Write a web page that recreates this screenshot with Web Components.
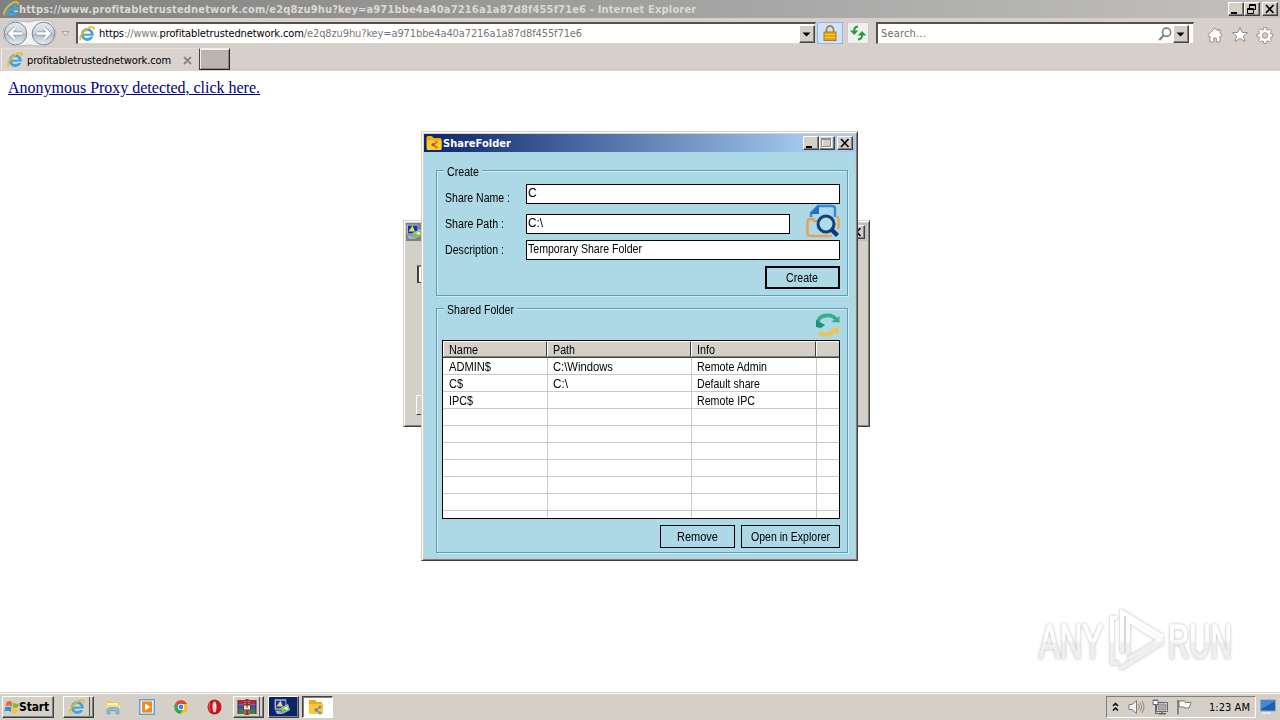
<!DOCTYPE html>
<html lang="en">
<head>
<meta charset="utf-8">
<title>Desktop</title>
<style>
html,body{margin:0;padding:0;width:1280px;height:720px;overflow:hidden;background:#fff}
body{font-family:"DejaVu Sans Condensed","DejaVu Sans",sans-serif;font-size:11px;color:#000}
</style>
</head>
<body>
<desktop-screen></desktop-screen>
<script>
const define = (name, css, html, init) => customElements.define(name, class extends HTMLElement {
  constructor() {
    super();
    const root = this.attachShadow({ mode: 'open' });
    const t = document.createElement('template');
    t.innerHTML = `<style>*{box-sizing:border-box}:host{box-sizing:border-box}${css}</style>${typeof html === 'function' ? html(this) : html}`;
    root.append(t.content.cloneNode(true));
  }
  connectedCallback() { if (init) init(this); }
});

const IE = `<circle cx="8.3" cy="8.5" r="5" fill="none" stroke="#3fa4df" stroke-width="2.900"/><path d="M4 8.700H13" stroke="#3fa4df" stroke-width="2"/><path d="M10.800 10.900H15V9.700H10.800z" fill="#d4e4ec"/><path d="M1.600 14.300C-.5 11.500 4.500 4.500 9.500 2 13 .3 15.600 .6 14.900 3.800" fill="none" stroke="#f0b81e" stroke-width="1.700"/>`;
const MONITOR = `<path d="M1 .5h11v10H1z" fill="#dfe5ee" stroke="#8a93a8"/><path d="M2 1.500h9.500v8H2z" fill="#1030b0"/><path d="M2.500 7.500L6.500 1.500l2.500 6z" fill="#f0dc40"/><path d="M6.500 9l7.500-4 2 6-7.500 4z" fill="#b8c8d0"/><path d="M7 9.500l7-3.500 1.500 5-7 3.500z" fill="#7cc04c"/><path d="M9 9.500l4.500-2 .5 3.500z" fill="#e6f4fa"/><path d="M1 11.500h5.500l2 3.500H3z" fill="#9cb4c8"/>`;
const ICONS = {
  ie: IE,
  folder: `<path d="M.5 2.500q0-1.500 1.500-1.500h4l1.500 2H14q1.500 0 1.500 1.500v9q0 1.500-1.500 1.500H2q-1.500 0-1.500-1.500z" fill="#f0ae14"/><path d="M1 5.500h14.500v8q0 1.500-1.500 1.500H2q-1 0-1-1.500z" fill="#ffca38"/><path d="M10.500 7L7.500 9.700l3 2.700" fill="none" stroke="#b5651d" stroke-width="1.400"/><circle cx="10.500" cy="7" r="1.300" fill="#d87d1c"/><circle cx="7" cy="9.700" r="1.600" fill="#b85a20"/><circle cx="10.500" cy="12.400" r="1.300" fill="#d87d1c"/>`,
  folder2: `<path d="M1 1h6l1.500 2H14v12H1z" fill="#f0a818"/><path d="M1 5h14v10H1z" fill="#ffc638"/><path d="M12 8L8 11l4 3" fill="none" stroke="#6889a8" stroke-width="1.200"/><circle cx="12" cy="8" r="1.500" fill="#7390ab"/><circle cx="8" cy="11" r="1.700" fill="#7390ab"/><circle cx="12" cy="14" r="1.500" fill="#7390ab"/>`,
  monitor: MONITOR,
  lock: `<path d="M4.500 8V4.500a3.500 3.500 0 0 1 7 0V8" fill="none" stroke="#a8853a" stroke-width="1.800"/><rect x="2" y="7" width="12" height="8.500" fill="#e5a212" stroke="#b87d10"/><path d="M3 9.500h10M3 12.500h10" stroke="#f7d050"/>`,
  refresh: `<path d="M8 1.500Q4.200 2 4.200 5.500V6" fill="none" stroke="#2d9a3a" stroke-width="2"/><path d="M0 5.500h8.400L4.200 10z" fill="#2d9a3a"/><path d="M8 14.500q4-.5 4-4V10" fill="none" stroke="#2d9a3a" stroke-width="2"/><path d="M7.700 10.500L12 6l4.200 4.500z" fill="#2d9a3a"/>`,
  glass: `<circle cx="9.800" cy="6" r="4.700" fill="none" stroke="#808080" stroke-width="1.800"/><path d="M6.500 9.500L1.500 15" stroke="#808080" stroke-width="2.500"/>`,
  home: `<path d="M8 1L.8 8.200 2.300 9.600 3 9v6h3.700v-4h2.600v4H13V9l.7.6L15.200 8.200 13 6V2.500h-2V4z" fill="#fff" stroke="#8c8885" stroke-width=".9"/>`,
  star: `<path d="M8 .3l2.200 5.200h5.500l-4.300 3.500 1.700 5.500L8 11.400l-5.100 3.100 1.700-5.500L.3 5.500h5.500z" fill="#fff" stroke="#8c8885" stroke-width=".9"/>`,
  gear: `<path d="M6.700 .6h2.600l.3 2 1.500.6 1.600-1.200 1.800 1.800-1.200 1.600.6 1.500 2 .3v2.600l-2 .3-.6 1.500 1.200 1.600-1.800 1.800-1.600-1.200-1.500.6-.3 2H6.700l-.3-2-1.500-.6L3.300 15 1.500 13.200l1.200-1.600-.6-1.500-2-.3V7.200l2-.3.600-1.500L1.500 3.800 3.300 2l1.600 1.200 1.500-.6z" fill="#fff" stroke="#8c8885" stroke-width=".9"/><circle cx="8" cy="8.500" r="2.700" fill="#d4cec9" stroke="#8c8885" stroke-width=".9"/>`,
  start: `<g transform="rotate(8 8 8)"><path d="M2 3.500Q4.800 1.700 7.600 3.200V7.500Q4.800 6.300 1.500 8z" fill="#ee6a2b"/><path d="M8.500 3.500Q11.500 5 14.500 3.200L14 7.500Q11 9.200 8.500 7.900z" fill="#7dbb38"/><path d="M1.400 9Q4.500 7.500 7.500 8.700V13Q4.500 11.700 1 13.300z" fill="#2d8ee0"/><path d="M8.400 9Q11.300 10.300 14 8.800L13.500 13Q11 14.600 8.400 13.400z" fill="#fcc22c"/></g>`,
  explorer: `<path d="M1 2h5l1 1h7v10H1z" fill="#ecc75c"/><path d="M2 4h11v3H2z" fill="#fff2b8"/><path d="M1 6h14v4H1z" fill="#f7dc82"/><path d="M2 15V11.500q0-3 3-3h6q3 0 3 3V15h-3v-2.500q0-1-1-1H6q-1 0-1 1V15z" fill="#86bde4" stroke="#5c98c8" stroke-width=".6"/>`,
  media: `<rect x=".7" y=".7" width="14.600" height="14.600" fill="#e7f1fa" stroke="#5b9ad0" stroke-width="1.300"/><rect x="3" y="2.500" width="10" height="11" fill="#f28a16"/><path d="M6 4.500l5.500 3.500L6 11.500z" fill="#fff"/>`,
  chrome: `<circle cx="8" cy="8" r="6.700" fill="#f2c51c"/><path d="M8 8L2.200 4.600A6.700 6.700 0 0 1 14 5H8z" fill="#df4335"/><path d="M8 8L2.200 4.600A6.700 6.700 0 0 0 7.500 14.700L10.500 9.500z" fill="#36a354"/><circle cx="8" cy="8" r="3.200" fill="#fff"/><circle cx="8" cy="8" r="2.400" fill="#4383ea"/>`,
  opera: `<ellipse cx="7.500" cy="8" rx="7" ry="7.500" fill="#c4161c"/><ellipse cx="7.500" cy="8" rx="2" ry="5.400" fill="#e7d9d5"/><path d="M2.500 4q-1.500 5 1 8" stroke="#ee6a68" fill="none"/>`,
  rar: `<path d="M-1 1h18v4.500H-1z" fill="#b3263e"/><path d="M-1 5.500h18V10H-1z" fill="#4550ae"/><path d="M-1 10h18v5H-1z" fill="#378247"/><path d="M-1 1v14M17 1v14" stroke="#4b2445"/><path d="M5.500 0h5v16h-5z" fill="#9d3036"/><path d="M4.500 6h7v5h-7z" fill="#eee6cf" stroke="#594526"/><path d="M8 5.500V9" stroke="#594526"/><path d="M6 0v6M10 0v6M6 11.500V16M10 11.500V16" stroke="#e5c2a0" stroke-dasharray="1 1"/>`,
  sound: `<path d="M1 5.500h3l4.500-4v13L4 10.500H1z" fill="#f4f4f4" stroke="#7e7a77"/><path d="M10.500 5.500q1.800 2.500 0 5M12.300 3.700q3 4.300 0 8.600M14 2q4 6 0 12" fill="none" stroke="#8c8885"/>`,
  net: `<path d="M4.500 3.500h11v9h-11z" fill="#f2f2f2" stroke="#666"/><path d="M6 5h8v6H6z" fill="#aaa8a6" stroke="#888"/><path d="M10 13v1.500M7 14.800h7" stroke="#666" stroke-width="1.500"/><path d="M3.500 5v9.500H7" fill="none" stroke="#666"/><path d="M1 1.500h5v4H1z" fill="#fff" stroke="#666"/><path d="M2.200 0v2M4.800 0v2" stroke="#666"/>`,
  flag: `<path d="M2 1v14.500" stroke="#6f6c69" stroke-width="1.500"/><path d="M3 2h5.500l1 1.500H15L13 9H9L8 8H3z" fill="#f8f8f8" stroke="#7c7976"/>`,
  desk: `<path d="M.5 1h15v11H.500z" fill="#215fae" stroke="#85a8d2"/><path d="M1 2h14L1 10z" fill="#438bd9"/><path d="M2 14h9" stroke="#eee" stroke-width="1.500"/>`,
};
define('app-icon', `:host{display:block;width:16px;height:16px;flex:none}svg{display:block;width:100%;height:100%;overflow:visible}`,
  el => `<svg viewBox="0 0 16 16">${ICONS[el.getAttribute('name')] || ''}</svg>`);

const GLYPH = {
  min: `<path d="M3 10h6v2H3z"/>`,
  restore: `<path d="M5.500 2.500h6v5h-6zM5 3.500h7" fill="none" stroke="#000"/><path d="M3.500 6.500h6v5h-6z" fill="#d4d0c8" stroke="#000"/><path d="M3 7.500h7" stroke="#000"/>`,
  max: `<path d="M3.500 3.500h9v8h-9z" fill="none" stroke="#fff"/><path d="M2.500 2.500h9v8h-9zM2 3.500h10" fill="none" stroke="#928d88"/>`,
  close: `<path d="M4 3l7.500 8M11.500 3L4 11" stroke="#000" stroke-width="1.700"/>`,
  down: `<path d="M3.500 5.500h8L7.500 9.500z"/>`,
};
define('win-control', `:host{display:block;width:16px;height:14px;flex:none;background:#d4d0c8;border:1px solid;border-color:#fff #404040 #404040 #fff;box-shadow:inset -1px -1px #808080}
 svg{display:block;width:14px;height:14px;margin:-1px 0 0 -1px;overflow:visible}:host([tall]){height:18px}:host([tall]) svg{margin-top:1px}`,
  el => `<svg viewBox="0 0 14 14">${GLYPH[el.getAttribute('kind')]}</svg>`);

define('nav-bar', `:host{display:flex;height:30px;background:#d6cfca;padding:0 7px 0 3px;align-items:flex-start;position:relative}
 .arrows{width:73px;height:30px;flex:none}
 .box{display:flex;align-items:center;height:22px;margin-top:4px;background:#fff;border:1px solid;border-color:#55514e #d8d3cf #d8d3cf #55514e;border-width:2px 1px 1px 2px}
 .addr{width:740px;padding:0 0 0 2px}.addr app-icon{margin:0 4px 0 -1px}.addr .t{flex:1;white-space:nowrap;color:#777}
 b{font-weight:normal;color:#000}
 .btn{width:26px;height:22px;margin:4px 0 0 1px;background:#cfe1fb;border:1px solid #8bb7ee;display:flex;align-items:center;justify-content:center}
 .r{width:22px;margin-left:4px;background:#edf1ed;border-color:#cacaca;border-radius:2px}
 .search{width:318px;margin-left:7px;padding:0 4px 0 3px;color:#6d6d6d}.search .t{flex:1}.search app-icon{width:14px;height:14px;margin-right:1px}
 .tools{display:flex;gap:9px;margin:9px 0 0 13px}`,
 `<svg class="arrows" viewBox="3 18 73 30"><defs><linearGradient id="g" x1="0" y1="0" x2="0" y2="1"><stop offset="0" stop-color="#e6eaf0"/><stop offset=".48" stop-color="#c9d1da"/><stop offset=".52" stop-color="#aebac7"/><stop offset="1" stop-color="#e9f1f7"/></linearGradient></defs>
 <path d="M3 33a12 12 0 0 1 12-12q7 0 14 1 7-2 14-2a13 13 0 0 1 0 26q-8 0-14-1-7 1-14 1A12 12 0 0 1 3 33z" fill="#f3f3f3" stroke="#aaa5a2" stroke-width=".7"/>
 <circle cx="15.500" cy="33.500" r="11.300" fill="url(#g)" stroke="#7b8794"/><circle cx="43.500" cy="33.500" r="11.300" fill="url(#g)" stroke="#7b8794"/>
 <path d="M22 33.500H10M15 28l-5.500 5.500L15 39" fill="none" stroke="#8795a3" stroke-width="4"/><path d="M22 33.500H10M15 28l-5.500 5.500L15 39" fill="none" stroke="#fff" stroke-width="2.500"/>
 <path d="M37 33.500h12M44 28l5.500 5.500L44 39" fill="none" stroke="#8795a3" stroke-width="4"/><path d="M37 33.500h12M44 28l5.500 5.500L44 39" fill="none" stroke="#fff" stroke-width="2.500"/>
 <path d="M62 31.500h7L65.500 36z" fill="#e5e2de" stroke="#aaa39e"/></svg>
 <div class="box addr"><app-icon name="ie"></app-icon><span class="t"><fit-text w="483"><b>https</b>://www.<b>profitabletrustednetwork.com</b>/e2q8zu9hu?key=a971bbe4a40a7216a1a87d8f455f71e6</fit-text></span><win-control kind="down" tall></win-control></div>
 <div class="btn"><app-icon name="lock"></app-icon></div><div class="btn r"><app-icon name="refresh"></app-icon></div>
 <div class="box search"><span class="t"><fit-text w="45">Search...</fit-text></span><app-icon name="glass"></app-icon><win-control kind="down" tall></win-control></div>
 <div class="tools"><app-icon name="home"></app-icon><app-icon name="star"></app-icon><app-icon name="gear"></app-icon></div>`);

define('tab-strip', `:host{display:flex;height:23px;background:#d6cfca;border-bottom:1px solid #d9d2ce;box-shadow:inset 0 -2px #d3ccc8}
 .tab{width:197px;display:flex;align-items:center;padding:1px 6px 0 5px;border-left:1px solid #eee;border-top:1px solid #e3deda;background:#d9d2ce;margin-left:1px}
 .tab app-icon{margin-right:4px}.t{flex:1}svg{width:9px;height:9px}
 .new{width:31px;height:22px;margin-left:1px;background:#bcb4b0;border:1px solid;border-color:#eee #222 #222 #444;box-shadow:inset 1px 1px #f2efed,inset -1px -1px #8d8784}`,
 `<div class="tab"><app-icon name="ie"></app-icon><span class="t"><fit-text w="144">profitabletrustednetwork.com</fit-text></span><svg viewBox="0 0 9 9"><path d="M1 1l7 7M8 1L1 8" stroke="#8d8784" stroke-width="1.900"/></svg></div><div class="new"></div>`);

define('browser-window', `:host{display:flex;flex-direction:column;height:692px;background:#fff}
 header{display:flex;align-items:center;height:18px;background:linear-gradient(90deg,#808080,#c2c1c0);padding:0 2px 0 3px;color:#dcd8d0;font-weight:bold;flex:none}
 header .t{flex:1}header win-control:last-child{margin-left:2px}
 main{flex:1;padding:7px 8px;font:16px/19px "Liberation Serif",serif}
 a{color:#00007c;text-decoration:underline}a fit-text{text-decoration:underline}`,
 `<header><app-icon name="ie"></app-icon><span class="t"><fit-text w="677">https://www.profitabletrustednetwork.com/e2q8zu9hu?key=a971bbe4a40a7216a1a87d8f455f71e6 - Internet Explorer</fit-text></span><win-control kind="min"></win-control><win-control kind="restore"></win-control><win-control kind="close"></win-control></header>
 <nav-bar></nav-bar><tab-strip></tab-strip><main><a href="#"><fit-text w="252">Anonymous Proxy detected, click here.</fit-text></a></main>`);

define('back-window', `:host{display:flex;flex-direction:column;background:#d4d0c8;border:1px solid;border-color:#d4d0c8 #404040 #404040 #d4d0c8;box-shadow:inset 1px 1px #fff,inset -1px -1px #808080;padding:2px}
 header{display:flex;justify-content:space-between;align-items:center;height:18px;background:linear-gradient(90deg,#808080,#c0c0c0);padding:0 2px 0 0}
 .f{width:20px;height:18px;margin:24px 0 0 11px;background:#fff;border:2px solid;border-color:#808080 #fff #404040 #404040;border-width:2px 1px 1px 2px}
 .b{width:20px;height:20px;margin:112px 0 0 10px;border:1px solid;border-color:#fff #404040 #404040 #fff}`,
 `<header><app-icon name="monitor"></app-icon><win-control kind="close"></win-control></header><div class="f"></div><div class="b"></div>`);

define('group-box', `:host{display:block;position:relative;border:1px solid #589fb9;box-shadow:inset 1px 1px #d0eef6,1px 1px #d0eef6}
 .l{position:absolute;left:7px;top:-7px;height:14px;line-height:16px;background:#add8e6;padding:0 3px}`,
 el => `<span class="l"><fit-text w="${el.getAttribute('lw')}">${el.getAttribute('label')}</fit-text></span><slot></slot>`);

define('text-field', `:host{display:block;height:20px;background:#fff;border:1px solid #000;padding:0 1px;line-height:17px}`, `<slot></slot>`);
define('push-button', `:host{display:flex;height:23px;align-items:center;justify-content:center;border:1px solid #000;line-height:15px;padding:1px 1px 0 0}:host([primary]){border-width:2px}`, `<slot></slot>`);

const rows = [['ADMIN$', 42, 'C:\\Windows', 60, 'Remote Admin', 70], ['C$', 14, 'C:\\', 15, 'Default share', 63], ['IPC$', 24, '', 0, 'Remote IPC', 58]];
const cell = (t, w) => `<div>${t ? `<fit-text w="${w}">${t}</fit-text>` : ''}</div>`;
define('list-view', `:host{display:block;height:179px;border:1px solid #000;background:#fff;overflow:hidden}
 .r,.h{display:grid;grid-template-columns:105px 144px 125px 1fr}
 .h{height:17px;grid-template-columns:104px 144px 125px 1fr;border-bottom:1px solid #404040;background:#d4d0c8}
 .h div{border:1px solid;border-color:#fff #404040 #808080 #fff;height:16px;line-height:16px;padding-left:5px}
 .h div:last-child{border-right:0}
 .r{height:17px}.r div{height:17px;border-right:1px solid #c8c8c8;border-bottom:1px solid #c8c8c8;line-height:18px;padding-left:6px}.r div+div{padding-left:5px}.r div:last-child{border-right:0}`,
 `<div class="h">${cell('Name', 29)}${cell('Path', 22)}${cell('Info', 18)}<div></div></div>` +
 [...rows, ...Array(7).fill(['', 0, '', 0, '', 0])].map(r => `<div class="r">${cell(r[0], r[1])}${cell(r[2], r[3])}${cell(r[4], r[5])}<div></div></div>`).join(''));

define('share-window', `:host{--squeeze:1;display:flex;flex-direction:column;background:#add8e6;border:1px solid;border-color:#d4d0c8 #404040 #404040 #d4d0c8;box-shadow:inset 1px 1px #fff,inset -1px -1px #808080,inset 2px 2px #d4d0c8,inset -2px -2px #c4ccc9;padding:2px;font:12px "Liberation Sans",sans-serif}
 header{--squeeze:0;display:flex;align-items:center;height:18px;padding:0 2px 0 2px;background:linear-gradient(90deg,#0a246a,#a6caf0 90%);color:#fff;font:bold 11px "DejaVu Sans Condensed","DejaVu Sans",sans-serif}
 header .t{flex:1;padding-left:1px}header win-control:last-child{margin-left:2px}
 .one{height:126px;margin:18px 7px 0 12px;padding:13px 7px 0 8px}
 .row{display:grid;grid-template-columns:81px 1fr;height:20px;align-items:start}.row>span{padding-top:6px;line-height:16px;height:20px}
 .p{grid-template-columns:81px 264px 1fr;margin:10px 0 6px}.p>span{padding-top:2px}.d>span{padding-top:2px}
 .p svg{width:34px;height:34px;margin:-10px 0 0 16px}
 .one push-button{width:75px;margin:6px 0 0 auto}
 .two{height:245px;margin:12px 7px 0 12px;padding:0 7px 0 5px}
 .two svg{display:block;width:24px;height:24px;margin:4px 0 3px auto}
 .foot{display:flex;justify-content:flex-end;gap:6px;margin-top:6px}`,
 `<header><app-icon name="folder"></app-icon><span class="t"><fit-text w="68">ShareFolder</fit-text></span><win-control kind="min"></win-control><win-control kind="max"></win-control><win-control kind="close"></win-control></header>
 <group-box class="one" label="Create" lw="32">
 <div class="row"><span><fit-text w="65">Share Name :</fit-text></span><text-field><fit-text w="8">C</fit-text></text-field></div>
 <div class="row p"><span><fit-text w="59">Share Path :</fit-text></span><text-field><fit-text w="15">C:\\</fit-text></text-field>
 <svg viewBox="0 0 34 34"><path d="M5 13V9L12 2h14q3 0 3 3v8" fill="none" stroke="#378bd6" stroke-width="2.500"/><path d="M4 10L13 1v9z" fill="#216ebc"/><path d="M11 17H8q0-2-2-2H4q-2.500 0-2.500 3v11q0 3 3 3H26M30 13q2.500 0 2.500 3v9" fill="none" stroke="#e8a44c" stroke-width="2.500"/><circle cx="20" cy="20" r="8" fill="#aedce9" stroke="#173f7b" stroke-width="3"/><path d="M25.500 25.500l6 6" stroke="#12366f" stroke-width="4.500"/></svg></div>
 <div class="row d"><span><fit-text w="59">Description :</fit-text></span><text-field><fit-text w="114">Temporary Share Folder</fit-text></text-field></div>
 <push-button primary><fit-text w="32">Create</fit-text></push-button></group-box>
 <group-box class="two" label="Shared Folder" lw="67">
 <svg viewBox="0 0 24 24"><path d="M2 12Q1 3 11 2.500q6-.5 9 4" fill="none" stroke="#35ae91" stroke-width="3.800"/><path d="M15 9l8.500 .5V3z" fill="#35ae91"/><path d="M0 14V7l9 5-4 3z" fill="#179477"/><path d="M3 20q8 4 14-1 3-2 3-3" fill="none" stroke="#ebc552" stroke-width="3.800"/><path d="M14 16l9-2v7z" fill="#ebc552"/></svg>
 <list-view></list-view><div class="foot"><push-button style="width:75px"><fit-text w="41">Remove</fit-text></push-button><push-button style="width:99px"><fit-text w="79">Open in Explorer</fit-text></push-button></div></group-box>`);

define('task-button', `:host{display:flex;width:31px;height:22px;flex:none;align-items:center;justify-content:center}
 :host([up]){border:1px solid;border-color:#fff #404040 #404040 #fff;box-shadow:inset -1px -1px #808080}
 :host([stack]){padding-right:4px;border-right:1px solid #404040;box-shadow:inset -1px -1px #808080,inset -3px 0 #d4d0c8,inset -4px 0 #555}
 :host([blue]){background:#0a246a;padding-right:3px;margin-left:1px}:host([pressed]){padding-right:3px;background:#fff;border:1px solid;border-color:#404040 #fff #fff #404040;box-shadow:inset 1px 1px #808080}`,
 el => `<app-icon name="${el.getAttribute('icon')}"></app-icon>`);

define('task-bar', `:host{display:flex;height:28px;background:#d4d0c8;border-top:1px solid #d4d0c8;box-shadow:inset 0 1px #fff;padding:3px 4px 0 2px;align-items:flex-start}
 .start{width:52px;height:22px;display:flex;align-items:center;font-weight:bold;padding-left:1px;border:1px solid;border-color:#fff #404040 #404040 #fff;box-shadow:inset -1px -1px #808080}
 .start fit-text{font-size:12px;margin-left:-1px}
 .apps{display:flex;gap:3px;margin-left:9px;flex:1}
 .tray{width:150px;height:22px;border:1px solid;border-color:#808080 #fff #fff #808080;display:flex;align-items:center;padding-left:5px}
 .tray svg{width:7px;height:10px;margin-right:9px}.tray app-icon{margin-right:8px}.tray fit-text{margin-left:9px}
 .desk{margin:3px 0 0 4px}`,
 `<div class="start"><app-icon name="start"></app-icon><fit-text w="30">Start</fit-text></div>
 <div class="apps"><task-button icon="ie" up stack></task-button><task-button icon="explorer"></task-button><task-button icon="media"></task-button><task-button icon="chrome"></task-button><task-button icon="opera"></task-button><task-button icon="rar" up stack></task-button><task-button icon="monitor" up blue></task-button><task-button icon="folder2" pressed></task-button></div>
 <div class="tray"><svg viewBox="0 0 7 10"><path d="M1 4l2.500-2.500L6 4M1 8.500L3.500 6 6 8.500" fill="none" stroke="#000" stroke-width="1.500"/></svg><app-icon name="sound"></app-icon><app-icon name="net"></app-icon><app-icon name="flag"></app-icon><fit-text w="41">1:23 AM</fit-text></div><app-icon class="desk" name="desk"></app-icon>`);

define('water-mark', `:host{display:block;width:240px;height:84px}svg{display:block;filter:drop-shadow(0 0 1.500px #b8b8b8)}text{font:48px "Liberation Sans",sans-serif;stroke-width:1.500px}`,
 `<svg width="240" height="84" viewBox="1020 598 240 84"><defs><linearGradient id="w" gradientUnits="userSpaceOnUse" x1="0" y1="610" x2="0" y2="672"><stop offset=".48" stop-color="#fff"/><stop offset=".54" stop-color="#efefef"/></linearGradient>
 <linearGradient id="t" gradientUnits="userSpaceOnUse" x1="0" y1="-48" x2="0" y2="14"><stop offset=".48" stop-color="#fff"/><stop offset=".54" stop-color="#efefef"/></linearGradient></defs>
 <g fill="url(#t)" stroke="url(#t)"><text transform="translate(1039 658) scale(.65 1)">ANY</text><text transform="translate(1168 658) scale(.615 1)">RUN</text></g>
 <g fill="none" stroke="url(#w)" stroke-width="4"><path d="M1128 654V620l32 20-32 19"/><path d="M1122 653V612l41 25M1117 618h-5v45h7M1120 669l43-27"/></g></svg>`);

define('desktop-screen', `:host{display:block;width:1280px;height:720px;position:relative;overflow:hidden}
 back-window{position:absolute;left:403px;top:220px;width:467px;height:207px}
 share-window{position:absolute;left:421px;top:131px;width:437px;height:430px}
 water-mark{position:absolute;left:1020px;top:598px}`,
 `<browser-window></browser-window><task-bar></task-bar><back-window></back-window><share-window></share-window><water-mark></water-mark>`);

define('fit-text', `:host{display:inline-block;white-space:nowrap}span{display:inline-block;transform-origin:0 50%;text-decoration:inherit}`, `<span><slot></slot></span>`, el => {
  const n = el.textContent.length, w = +el.getAttribute('w'), nat = el.getBoundingClientRect().width;
  if (!w || n < 2) return;
  if (getComputedStyle(el).getPropertyValue('--squeeze').trim() === '1') {
    el.style.width = w + 'px';
    el.shadowRoot.querySelector('span').style.transform = `scaleX(${w / nat})`;
  } else el.style.letterSpacing = (w - nat) / n + 'px';
});
</script>
</body>
</html>
